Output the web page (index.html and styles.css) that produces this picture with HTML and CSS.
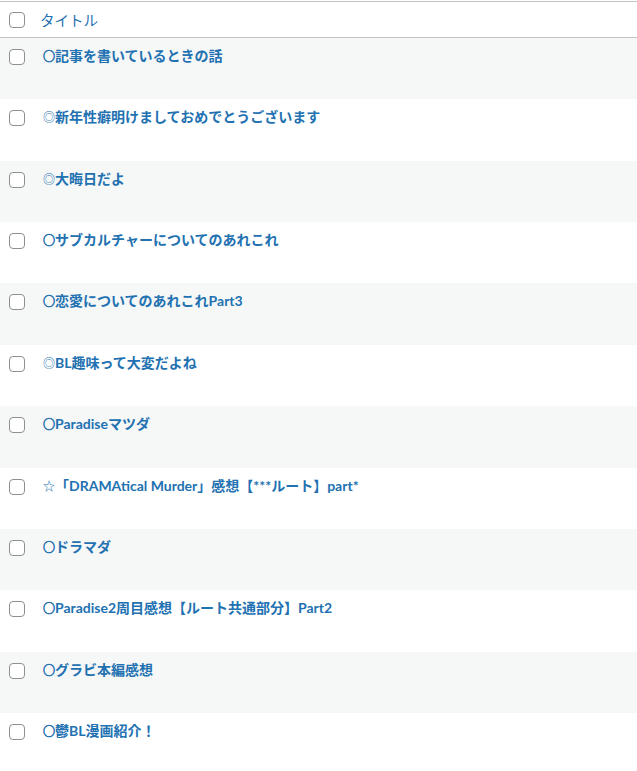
FILE: index.html
```html
<!DOCTYPE html>
<html lang="ja">
<head>
<meta charset="utf-8">
<link rel="stylesheet" href="styles.css">
</head>
<body>
<div class="list">
  <div class="head">
    <span class="cb"></span>
    <a class="head-title">タイトル</a>
  </div>
  <div class="row alt"><span class="cb"></span><a class="title"><span class="mark ring">○</span>記事を書いているときの話</a></div>
  <div class="row"><span class="cb"></span><a class="title"><span class="mark">◎</span>新年性癖明けましておめでとうございます</a></div>
  <div class="row alt"><span class="cb"></span><a class="title"><span class="mark">◎</span>大晦日だよ</a></div>
  <div class="row"><span class="cb"></span><a class="title"><span class="mark ring">○</span>サブカルチャーについてのあれこれ</a></div>
  <div class="row alt"><span class="cb"></span><a class="title"><span class="mark ring">○</span>恋愛についてのあれこれPart3</a></div>
  <div class="row"><span class="cb"></span><a class="title"><span class="mark">◎</span>BL趣味って大変だよね</a></div>
  <div class="row alt"><span class="cb"></span><a class="title"><span class="mark ring">○</span>Paradiseマツダ</a></div>
  <div class="row"><span class="cb"></span><a class="title"><span class="mark">☆</span>「DRAMAtical Murder」感想【***ルート】part*</a></div>
  <div class="row alt"><span class="cb"></span><a class="title"><span class="mark ring">○</span>ドラマダ</a></div>
  <div class="row"><span class="cb"></span><a class="title"><span class="mark ring">○</span>Paradise2周目感想【ルート共通部分】Part2</a></div>
  <div class="row alt"><span class="cb"></span><a class="title"><span class="mark ring">○</span>グラビ本編感想</a></div>
  <div class="row"><span class="cb"></span><a class="title"><span class="mark ring">○</span>鬱BL漫画紹介！</a></div>
</div>
</body>
</html>
```
FILE: styles.css
```css
html, body {
  margin: 0;
  background: #fff;
}
body {
  padding-top: 1px;
  font-family: "Lato", "Noto Sans CJK JP", sans-serif;
  color: #2271b1;
}
.list {
  border-top: 1px solid #c3c4c7;
}
.cb {
  display: block;
  box-sizing: border-box;
  width: 16px;
  height: 16px;
  border: 1px solid #8c8f94;
  border-radius: 4px;
  background: #fff;
  flex: none;
}
.head {
  display: flex;
  align-items: center;
  height: 35px;
  border-bottom: 1px solid #c3c4c7;
  padding-left: 9px;
}
.head-title {
  margin-left: 15px;
  font-family: "Noto Sans CJK JP", sans-serif;
  font-size: 14.5px;
  font-weight: 400;
  color: #2271b1;
}
.row {
  display: flex;
  align-items: flex-start;
  height: 61.36px;
  box-sizing: border-box;
  padding: 11px 0 0 9px;
  background: #fff;
}
.row.alt {
  background: #f6f7f7;
}
.title {
  margin: -3px 0 0 18px;
  line-height: 20px;
  font-size: 14px;
  font-weight: 700;
  color: #2271b1;
}
.mark {
  font-family: "Noto Sans CJK JP", sans-serif;
  font-size: 12px;
  font-weight: 400;
}
.mark.ring {
  -webkit-text-stroke: 0.7px #2271b1;
}
```
